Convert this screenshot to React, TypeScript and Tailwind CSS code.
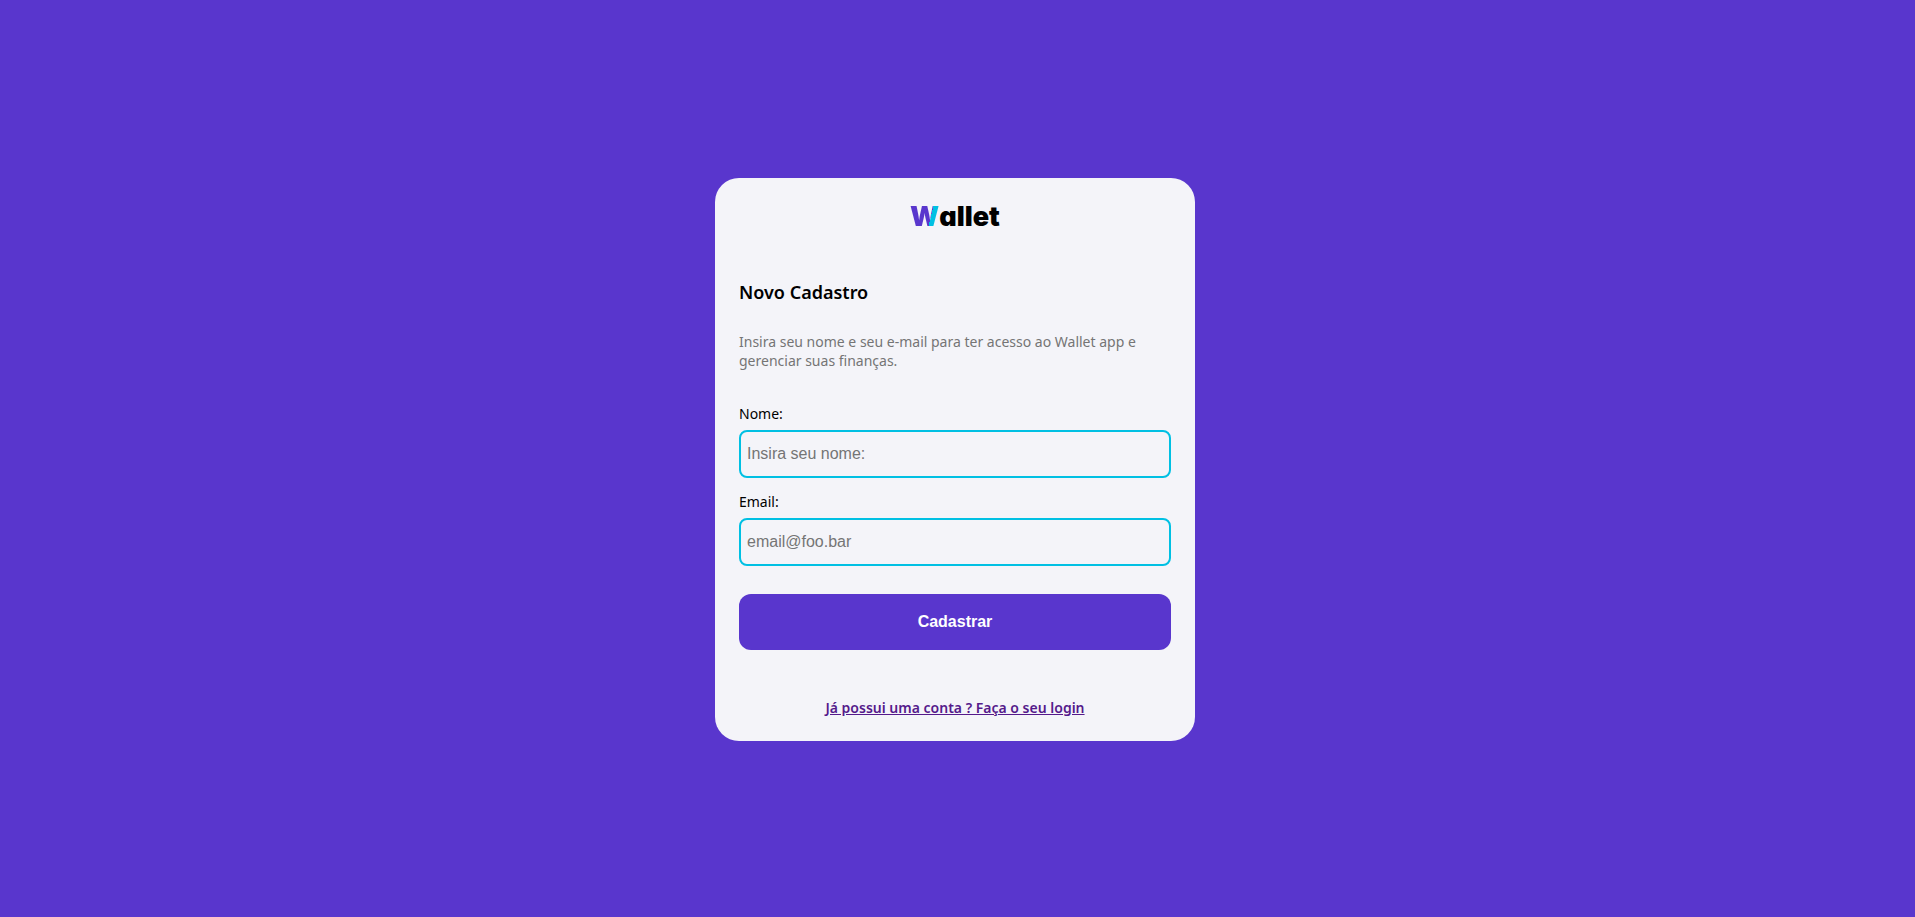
import { useState } from 'react';

type FieldProps = {
  id: string;
  label: string;
  type: string;
  placeholder: string;
  value: string;
  onChange: (value: string) => void;
};

function Logo() {
  return (
    <div className="flex h-[30px] items-center justify-center font-['Inter',sans-serif] text-[27px] leading-[30px] font-black text-black [font-feature-settings:'cv11']">
      <span className="bg-linear-[104deg,#5936cd_67%,#00c0e3_67%] bg-clip-text text-transparent">W</span>
      <span>allet</span>
    </div>
  );
}

function Field({ id, label, type, placeholder, value, onChange }: FieldProps) {
  return (
    <div className="flex flex-col gap-[7px]">
      <label htmlFor={id} className="text-sm leading-[19px] text-black">
        {label}
      </label>
      <input
        id={id}
        type={type}
        placeholder={placeholder}
        value={value}
        onChange={(event) => onChange(event.target.value)}
        className="h-12 w-full rounded-lg border-2 border-[#00c0e3] bg-transparent px-1.5 font-['Liberation_Sans',Arial,sans-serif] text-base text-black outline-none placeholder:text-[#757575]"
      />
    </div>
  );
}

export default function App() {
  const [name, setName] = useState('');
  const [email, setEmail] = useState('');

  return (
    <main className="flex min-h-screen items-center justify-center bg-[#5936cd] pt-0.5 pr-[5px] font-['Noto_Sans',sans-serif]">
      <section className="flex w-full max-w-[480px] flex-col rounded-3xl bg-[#f4f4f9] p-6">
        <Logo />
        <h1 className="mt-12 text-lg leading-[25px] font-semibold text-black">Novo Cadastro</h1>
        <p className="mt-[27px] text-sm leading-[19px] text-[#757575]">
          Insira seu nome e seu e-mail para ter acesso ao Wallet app e gerenciar suas finanças.
        </p>
        <form className="mt-[34px] flex flex-col" onSubmit={(event) => event.preventDefault()}>
          <div className="flex flex-col gap-[14px]">
            <Field
              id="name"
              label="Nome:"
              type="text"
              placeholder="Insira seu nome:"
              value={name}
              onChange={setName}
            />
            <Field
              id="email"
              label="Email:"
              type="email"
              placeholder="email@foo.bar"
              value={email}
              onChange={setEmail}
            />
          </div>
          <button
            type="submit"
            className="mt-7 h-14 w-full cursor-pointer rounded-xl bg-[#5936cd] font-['Liberation_Sans',Arial,sans-serif] text-base font-bold text-white"
          >
            Cadastrar
          </button>
        </form>
        <a
          href="#login"
          className="mt-12 self-center text-sm leading-[19px] font-semibold text-[#551a8b] underline"
        >
          Já possui uma conta ? Faça o seu login
        </a>
      </section>
    </main>
  );
}
